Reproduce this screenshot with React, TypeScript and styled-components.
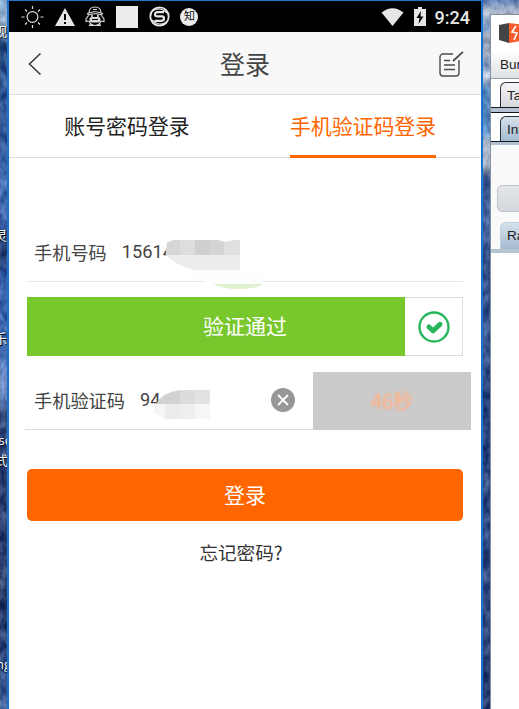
import React from 'react';
import styled, { createGlobalStyle } from 'styled-components';

const GlobalStyle = createGlobalStyle`
  * { box-sizing: border-box; }
  body {
    margin: 0;
    overflow: hidden;
    font-family: Roboto, "Noto Sans CJK SC", sans-serif;
    color: #333;
  }
`;

const Desktop = styled.div`
  display: flex;
  width: 519px;
  height: 709px;
  overflow: hidden;
`;

const LeftWallpaper = styled.div`
  position: relative;
  flex: 0 0 7px;
  overflow: hidden;
  background: linear-gradient(#8fbce8 0, #b9d6ee 18px, #7fa5cf 36px, #1f4a80 42px, #27559b 100px, #234f97 140px, #3f74c4 180px, #2c58a6 225px, #1d3567 255px, #2b5cae 275px, #3467bb 350px, #7c9edb 375px, #5d80bd 405px, #2c4375 412px, #23386b 500px, #172a59 600px, #22407c 670px, #4266a3 709px);
`;

const Texture = styled.svg`
  position: absolute;
  inset: 0;
  width: 100%;
  height: 100%;
`;

const DesktopLabel = styled.span<{ $top: number; $right?: number }>`
  position: absolute;
  top: ${({ $top }) => $top}px;
  right: ${({ $right = 0 }) => $right}px;
  color: #fff;
  font: 13px/16px "Open Sans", "Noto Sans CJK SC", sans-serif;
  white-space: nowrap;
  text-shadow: 1px 1px 1px #000;
`;

const Phone = styled.div`
  display: flex;
  flex-direction: column;
  flex: 0 0 476px;
  border: solid #1b73cb;
  border-width: 1px 2px 0;
  background: #fff;
`;

const StatusBar = styled.div`
  display: flex;
  align-items: center;
  height: 31px;
  padding: 0 11px 0 12px;
  background: #000;
  color: #e6e6e6;
`;

const Notifications = styled.div`
  display: flex;
  align-items: center;
  gap: 10.7px;
  margin-right: auto;
  svg { display: block; }
`;

const Blank = styled.div`
  width: 22px;
  height: 22px;
  background: #ececec;
`;

const Zhihu = styled.div`
  width: 18px;
  height: 18px;
  border-radius: 50%;
  background: #ececec;
  color: #111;
  font-size: 11px;
  line-height: 18px;
  text-align: center;
`;

const SystemStatus = styled.div`
  display: flex;
  align-items: center;
  gap: 10px;
  svg { display: block; }
`;

const Clock = styled.span`
  margin-left: -1px;
  font-size: 18px;
  font-weight: 500;
  line-height: 31px;
  padding-top: 1px;
`;

const Header = styled.header`
  display: flex;
  align-items: center;
  justify-content: space-between;
  height: 63px;
  padding: 2px 17px 0 18px;
  border-bottom: 1px solid #dedede;
  background: #f8f8f8;
  svg { display: block; }
`;

const Title = styled.h1`
  margin: 4px 0 0 8px;
  color: #444;
  font-size: 25px;
  font-weight: 400;
  line-height: 36px;
`;

const Tabs = styled.nav`
  display: flex;
  height: 63px;
  border-bottom: 1px solid #dedede;
`;

const TabSlot = styled.div`
  display: flex;
  flex: 1;
  justify-content: center;
`;

const Tab = styled.a<{ $active?: boolean }>`
  height: 63px;
  border-bottom: 3px solid ${({ $active }) => ($active ? '#f60' : 'transparent')};
  color: ${({ $active }) => ($active ? '#f60' : '#222')};
  font-size: 20.9px;
  line-height: 64px;
`;

const Form = styled.main`
  display: flex;
  flex-direction: column;
  padding: 66px 10px 0 18px;
`;

const PhoneField = styled.div`
  position: relative;
  display: flex;
  align-items: center;
  height: 58px;
  margin-right: 8px;
  padding: 0 0 2px 7px;
  border-bottom: 1px solid #e8e8e8;
`;

const Label = styled.label`
  color: #444;
  font-size: 18.2px;
`;

const Value = styled.span`
  margin-left: 15px;
  color: #444;
  font-size: 18.2px;
`;

const Mosaic = styled.svg<{ $left: number; $top: number }>`
  position: absolute;
  left: ${({ $left }) => $left}px;
  top: ${({ $top }) => $top}px;
`;

const Verification = styled.div`
  display: flex;
  height: 59px;
  margin: 15px 8px 0 0;
`;

const Passed = styled.div`
  flex: 1;
  background: #78c82d;
  color: #fff;
  font-size: 21px;
  line-height: 60px;
  text-align: center;
  padding-left: 58px;
`;

const CheckCell = styled.div`
  display: grid;
  place-items: center;
  width: 58px;
  border: 1px solid #ddd;
  border-left: 0;
`;

const CodeRow = styled.div`
  display: flex;
  height: 58px;
  margin-top: 16px;
`;

const CodeField = styled.div`
  position: relative;
  display: flex;
  flex: 1;
  align-items: center;
  margin-left: -2px;
  padding: 0 18px 2px 9px;
  border-bottom: 1px solid #ddd;
`;

const Clear = styled.svg`
  margin-left: auto;
`;

const Countdown = styled.button`
  width: 158px;
  padding: 0;
  border: 0;
  background: #cbcbcb;
  color: rgba(245, 182, 148, 0.75);
  font: 400 20px/56px "Noto Sans CJK SC", sans-serif;
  text-shadow: 0 0 3px #f5b694;
`;

const Submit = styled.button`
  height: 52px;
  margin: 39px 8px 0 0;
  padding: 0 0 2px;
  border: 0;
  border-radius: 5px;
  background: #f60;
  color: #fff;
  font: 21px/50px "Noto Sans CJK SC", sans-serif;
`;

const Forgot = styled.a`
  margin: 18px 8px 0 0;
  padding-right: 8px;
  color: #333;
  font: 18.6px/26px "Noto Sans CJK SC", sans-serif;
  text-align: center;
`;

const RightDesktop = styled.div`
  position: relative;
  flex: 1;
  padding: 14px 0 0 7px;
  background: linear-gradient(#6b95cb 0, #d7dfe8 11px, #7ca5d4 29px, #e4e9ef 34px, #98a8bb 43px, #dfe5ec 54px, #8eb4dd 65px, #e8edf2 77px, #5593d4 91px, #5c9bda 132px, #d2dce5 142px, #c5d4e1 168px, #27488b 180px, #5175b7 220px, #1e3c78 260px, #2d5298 330px, #1a3774 400px, #233f7d 560px, #122b62 709px);
`;

const BurpWindow = styled.div`
  position: relative;
  display: flex;
  flex-direction: column;
  width: 60px;
  height: 695px;
  border: solid #858f9b;
  border-width: 1px 0 0 1px;
  background: #fff;
  color: #222;
  font: 13.5px/17px "Liberation Sans", sans-serif;
`;

const TitleStrip = styled.div`
  height: 37px;
  padding: 8px 0 0 8px;
  svg { display: block; }
`;

const MenuStrip = styled.div`
  height: 27px;
  padding: 4px 0 0 9px;
  border-bottom: 1px solid #929daa;
  background: linear-gradient(#fdfdfd, #dfe1e4);
`;

const TabStrip = styled.div`
  height: 28px;
  padding: 3px 0 0 9px;
`;

const Divider = styled.div<{ $closed?: boolean }>`
  height: ${({ $closed }) => ($closed ? 6 : 4)}px;
  border: solid #101820;
  border-width: 1px 0 ${({ $closed }) => ($closed ? 1 : 0)}px;
  background: #b3c2d3;
`;

const WindowTab = styled.div<{ $blue?: boolean; $quiet?: boolean }>`
  height: 100%;
  padding: 4px 0 0 6px;
  border: 1px solid ${({ $quiet }) => ($quiet ? '#c2d1df' : '#28303c')};
  border-width: 1px 0 0 1px;
  border-radius: 6px 0 0 0;
  background: ${({ $blue }) => ($blue ? 'linear-gradient(#d5e1eb, #a4bbd1)' : 'linear-gradient(#f5f5f6, #d7d8dc)')};
`;

const Toolbar = styled.div`
  height: 77px;
  padding: 40px 0 0 6px;
  background: #f9f9fa;
`;

const ToolButton = styled.div`
  height: 27px;
  border: 1px solid #bfc4cc;
  border-radius: 5px;
  background: linear-gradient(#e4e6ea, #d4d7dc);
`;

const RawTabs = styled.div`
  height: 31px;
  padding-left: 9px;
  border-bottom: 4px solid #b7c5d2;
  background: #f9f9fa;
`;

function RockTexture({ id, seed }: { id: string; seed: number }) {
  return (
    <Texture aria-hidden="true">
      <filter id={id} x="0" y="0" width="100%" height="100%" colorInterpolationFilters="sRGB">
        <feTurbulence type="fractalNoise" baseFrequency="0.14 0.09" numOctaves="4" seed={seed} />
        <feColorMatrix values="1.6 0 0 0 -0.5  1.6 0 0 0 -0.42  1.5 0 0 0 -0.2  0 0 0 0 0.3" />
      </filter>
      <rect width="100%" height="100%" filter={`url(#${id})`} />
    </Texture>
  );
}

function SunIcon() {
  return (
    <svg width="23" height="22" viewBox="0 0 23 22" fill="none" stroke="#ddd" strokeWidth="1.2">
      <circle cx="11.5" cy="11" r="5.4" />
      <path d="M11.5 0v3M11.5 19v3M.5 11h3M19.5 11h3M4 3.5l2 2M17 16.5l2 2M4 18.5l2-2M17 5.5l2-2" />
    </svg>
  );
}

function WarningIcon() {
  return (
    <svg width="20" height="18" viewBox="0 0 20 18">
      <path d="M10 0l10 18H0z" fill="#e6e6e6" />
      <path d="M10 6v6M10 14v2" stroke="#000" strokeWidth="2" />
    </svg>
  );
}

function PenguinIcon() {
  return (
    <svg width="20" height="21" viewBox="0 0 20 21" fill="none" stroke="#ddd" strokeWidth="1.1">
      <path d="M4 7C4 3 6.500 1 10 1s6 2 6 6" />
      <path d="M2.500 7.500Q10 4 17.500 7.500L16.500 9Q10 6.500 3.500 9zM8 3.500h4" />
      <path d="M3.500 9.500L1 13v2.500l2.500-.5M16.500 9.500L19 13v2.500l-2.500-.5M4 15q1.500 4.500 6 4.500T16 15" />
      <path d="M7 8.500v2.500M13 8.500v2.500" strokeWidth="1.600" />
      <rect x="5" y="11.500" width="10" height="4.500" rx="2.200" fill="#ddd" />
      <path d="M7 13.500h6" stroke="#000" />
      <path d="M4 19.300h4M12 19.300h4" strokeWidth="1.600" />
    </svg>
  );
}

function SogouIcon() {
  return (
    <svg width="21" height="21" viewBox="0 0 21 21" fill="none">
      <circle cx="10.5" cy="10.5" r="9.2" stroke="#e6e6e6" strokeWidth="1.8" />
      <path d="M2 6C8 1 14 3 18 7M19 15C13 20 7 18 3 14" stroke="#e6e6e6" strokeWidth="1.5" />
      <path d="M15 6.200H8.500Q6 6.200 6 8.300T8.500 10.400H13Q15 10.400 15 12.500T12.500 14.800H5.500" stroke="#e6e6e6" strokeWidth="2.2" />
    </svg>
  );
}

function CheckIcon() {
  return (
    <svg width="32" height="32" viewBox="0 0 32 32" fill="none" stroke="#27b65a">
      <circle cx="16" cy="16" r="14.5" strokeWidth="2.4" />
      <path d="M11 16l4.200 3.800 6.800-6.500" strokeWidth="5" strokeLinecap="round" strokeLinejoin="round" />
    </svg>
  );
}

export default function App() {
  return (
    <Desktop>
      <GlobalStyle />
      <LeftWallpaper>
        <RockTexture id="rock-left" seed={4} />
        <DesktopLabel $top={23}>观</DesktopLabel>
        <DesktopLabel $top={227}>灵</DesktopLabel>
        <DesktopLabel $top={330}>乐</DesktopLabel>
        <DesktopLabel $top={432} $right={-4}>sc</DesktopLabel>
        <DesktopLabel $top={452} $right={-1}>式</DesktopLabel>
        <DesktopLabel $top={656} $right={-4}>ng</DesktopLabel>
      </LeftWallpaper>
      <Phone>
        <StatusBar>
          <Notifications>
            <SunIcon />
            <WarningIcon />
            <PenguinIcon />
            <Blank />
            <SogouIcon />
            <Zhihu>知</Zhihu>
          </Notifications>
          <SystemStatus>
            <svg width="23" height="18" viewBox="0 0 23 18">
              <path d="M.5 4.500Q11.500-4 22.500 4.500L11.500 18z" fill="#e6e6e6" />
            </svg>
            <svg width="12" height="19" viewBox="0 0 12 19">
              <path d="M4 0h4v2h4v17H0V2h4z" fill="#e6e6e6" />
              <path d="M7 4L2.500 11h3L4.500 17 9.500 9.500h-3z" fill="#000" />
            </svg>
            <Clock>9:24</Clock>
          </SystemStatus>
        </StatusBar>
        <Header>
          <svg width="16" height="24" viewBox="0 0 16 24" fill="none" stroke="#444" strokeWidth="1.7">
            <path d="M13.500 1.500L2.500 12l11 10.500" />
          </svg>
          <Title>登录</Title>
          <svg width="25" height="27" viewBox="0 0 25 27" fill="none" stroke="#4c4c4c" strokeWidth="1.4">
            <path d="M14 3H4a3 3 0 0 0-3 3v16a3 3 0 0 0 3 3h13a3 3 0 0 0 3-3V9M5 9.500h6M5 14h11M5 18.500h11" />
            <path d="M14 10L24 .8" strokeWidth="1.8" />
          </svg>
        </Header>
        <Tabs>
          <TabSlot><Tab>账号密码登录</Tab></TabSlot>
          <TabSlot><Tab $active>手机验证码登录</Tab></TabSlot>
        </Tabs>
        <Form>
          <PhoneField>
            <Label>手机号码</Label>
            <Value>15614</Value>
            <Mosaic $left={139} $top={15} width="102" height="53" viewBox="0 0 102 53">
              <path d="M1 2h73v29H28Q10 27 0 16z" fill="#ededed" />
              <path d="M1 4L7 1h22v15H0z" fill="#d6d6d6" />
              <path d="M14 1h15v15H14z" fill="#ddd" />
              <path d="M29 1h15v15H29z" fill="#cfcfcf" />
              <path d="M44 1h9l7 3v12H44z" fill="#d5d5d5" />
              <path d="M58 4l8-3h8v15H58z" fill="#dfdfdf" />
              <path d="M28 31h72v11q-12 3-25 3H46Q31 42 28 31" fill="#fdfdfd" />
              <path d="M47 45h51q-8 5-24 5-19 0-27-5" fill="#dff2cf" />
            </Mosaic>
          </PhoneField>
          <Verification>
            <Passed>验证通过</Passed>
            <CheckCell><CheckIcon /></CheckCell>
          </Verification>
          <CodeRow>
            <CodeField>
              <Label>手机验证码</Label>
              <Value>94</Value>
              <Mosaic $left={129} $top={17} width="58" height="31" viewBox="0 0 58 31">
                <path d="M0 15h56v15H11L0 24z" fill="#f6f6f6" />
                <path d="M2 15Q9 3 26 1v14z" fill="#d2d2d2" />
                <path d="M26 1h15v14H26z" fill="#dcdcdc" />
                <path d="M41 1h15v14H41z" fill="#e2e2e2" />
                <path d="M11 15h15v15H11z" fill="#ececec" />
                <path d="M26 15h15v15H26z" fill="#eee" />
              </Mosaic>
              <Clear width="24" height="24" viewBox="0 0 24 24">
                <circle cx="12" cy="12" r="12" fill="#979797" />
                <path d="M7 7l10 10M17 7L7 17" stroke="#fff" strokeWidth="1.8" />
              </Clear>
            </CodeField>
            <Countdown>46秒</Countdown>
          </CodeRow>
          <Submit>登录</Submit>
          <Forgot>忘记密码?</Forgot>
        </Form>
      </Phone>
      <RightDesktop>
        <RockTexture id="rock-right" seed={9} />
        <BurpWindow>
          <TitleStrip>
            <svg width="26" height="20" viewBox="0 0 26 20">
              <path d="M0 2L10 0v20L0 17z" fill="#444" />
              <path d="M10 0l16 2v15l-16 3z" fill="#f45b28" />
              <path d="M17 3l-4 6 5 1-3 7" fill="none" stroke="#fff" strokeWidth="1.6" />
            </svg>
          </TitleStrip>
          <MenuStrip>Burp</MenuStrip>
          <TabStrip><WindowTab>Target</WindowTab></TabStrip>
          <Divider $closed />
          <TabStrip><WindowTab $blue>Intercept</WindowTab></TabStrip>
          <Divider />
          <Toolbar><ToolButton /></Toolbar>
          <RawTabs><WindowTab $blue $quiet>Raw</WindowTab></RawTabs>
        </BurpWindow>
      </RightDesktop>
    </Desktop>
  );
}
